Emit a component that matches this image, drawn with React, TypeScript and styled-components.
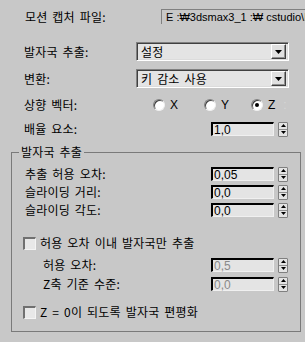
import React from "react";
import styled, { createGlobalStyle } from "styled-components";

const GlobalStyle = createGlobalStyle`
  html, body {
    margin: 0;
    padding: 0;
    background: #c8c8c8;
  }
  body {
    font-family: "Noto Sans CJK KR", "Noto Sans", sans-serif;
    font-size: 12px;
    color: #000;
  }
`;

const Panel = styled.div`
  width: 305px;
  height: 342px;
  box-sizing: border-box;
  background: #c8c8c8;
  overflow: hidden;
  display: flex;
  flex-direction: column;
  padding-top: 9px;
`;

const Row = styled.div<{ $h: number; $mt?: number; $pl?: number }>`
  display: flex;
  align-items: center;
  height: ${(p) => p.$h}px;
  margin-top: ${(p) => p.$mt ?? 0}px;
  padding-left: ${(p) => p.$pl ?? 24}px;
  flex-shrink: 0;
  white-space: nowrap;
`;

const Label = styled.div<{ $w: number }>`
  width: ${(p) => p.$w}px;
  flex-shrink: 0;
  line-height: 14px;
  word-spacing: 2px;
  letter-spacing: 0.2px;
`;

const PathBox = styled.div`
  flex: 1 1 auto;
  min-width: 0;
  height: 15px;
  box-sizing: border-box;
  border-top: 1px solid #808080;
  border-left: 1px solid #808080;
  padding-left: 4px;
  font-family: "Liberation Sans", Arial, sans-serif;
  font-size: 11px;
  line-height: 14px;
  overflow: hidden;
  white-space: nowrap;
`;

const Combo = styled.div`
  width: 153px;
  height: 19px;
  box-sizing: border-box;
  display: flex;
  align-items: center;
  border-top: 1px solid #808080;
  border-left: 1px solid #808080;
  border-right: 1px solid #fff;
  border-bottom: 1px solid #fff;
  box-shadow: inset 1px 1px 0 #404040, inset -1px -1px 0 #dcdcdc;
  background: #e4e4e4;
  padding: 0 2px 0 4px;
`;

const ComboText = styled.div`
  flex: 1;
  line-height: 15px;
  word-spacing: 2px;
  letter-spacing: 0.2px;
`;

const ComboButton = styled.div`
  width: 15px;
  height: 15px;
  box-sizing: border-box;
  background: #e0e0e0;
  border-top: 1px solid #fff;
  border-left: 1px solid #fff;
  border-right: 1px solid #404040;
  border-bottom: 1px solid #404040;
  box-shadow: inset -1px -1px 0 #909090;
  display: flex;
  align-items: center;
  justify-content: center;
`;

const RadioItem = styled.div<{ $w?: number }>`
  display: flex;
  align-items: center;
  width: ${(p) => (p.$w ? `${p.$w}px` : "auto")};
  flex-shrink: 0;
  font-family: "Liberation Sans", Arial, sans-serif;
  font-size: 12px;
`;

const RadioDot = styled.span<{ $on?: boolean }>`
  width: 12px;
  height: 12px;
  box-sizing: border-box;
  border-radius: 50%;
  background: #fff;
  border: 1px solid;
  border-color: #808080 #f0f0f0 #f0f0f0 #808080;
  box-shadow: inset 1px 1px 0 #404040;
  margin-right: 5px;
  display: flex;
  align-items: center;
  justify-content: center;
  &::after {
    content: "";
    width: 4px;
    height: 4px;
    border-radius: 50%;
    background: #000;
    display: ${(p) => (p.$on ? "block" : "none")};
  }
`;

const Faint = styled.span`
  color: #d6d6d6;
  margin-left: 8px;
`;

const Spinner = styled.div`
  display: flex;
  align-items: center;
  gap: 4px;
`;

const SpinField = styled.div<{ $dim?: boolean }>`
  width: 63px;
  height: 14px;
  box-sizing: border-box;
  background: #e4e4e4;
  border-top: 2px solid #000;
  border-left: 2px solid #000;
  border-right: 1px solid #f0f0f0;
  border-bottom: 1px solid #f0f0f0;
  padding-left: 1px;
  font-family: "Liberation Sans", Arial, sans-serif;
  font-size: 12px;
  line-height: 12px;
  color: ${(p) => (p.$dim ? "#8a8a8a" : "#000")};
`;

const SpinButtons = styled.div`
  width: 10px;
  height: 15px;
  box-sizing: border-box;
  display: flex;
  flex-direction: column;
  border: 1px solid #808080;
  border-radius: 1px;
  background: #e4e4e4;
`;

const SpinHalf = styled.div<{ $top?: boolean }>`
  flex: 1;
  display: flex;
  align-items: center;
  justify-content: center;
  border-bottom: ${(p) => (p.$top ? "1px solid #909090" : "none")};
`;

const Group = styled.div`
  position: relative;
  margin: 16px 0 0 11px;
  width: 290px;
  height: 180px;
  box-sizing: border-box;
  border: 1px solid #7a7a7a;
  display: flex;
  flex-direction: column;
`;

const Legend = styled.div`
  position: absolute;
  top: -8px;
  left: 7px;
  padding: 0 2px;
  background: #c8c8c8;
  line-height: 14px;
  word-spacing: 2px;
  letter-spacing: 0.2px;
`;

const CheckBox = styled.span`
  width: 13px;
  height: 13px;
  box-sizing: border-box;
  background: #e8e8e8;
  border-top: 2px solid #707070;
  border-left: 2px solid #707070;
  border-right: 1px solid #f4f4f4;
  border-bottom: 1px solid #f4f4f4;
  margin-right: 4px;
  flex-shrink: 0;
`;

const CheckLabel = styled.span`
  line-height: 14px;
  word-spacing: 2px;
  letter-spacing: 0.2px;
`;

const Arrow = ({ up, w = 7, h = 4 }: { up?: boolean; w?: number; h?: number }) => (
  <svg width={w} height={h} viewBox={`0 0 ${w} ${h}`}>
    <polygon
      points={up ? `0,${h} ${w},${h} ${w / 2},0` : `0,0 ${w},0 ${w / 2},${h}`}
      fill="#000"
    />
  </svg>
);

const Spin = ({ value, dim }: { value: string; dim?: boolean }) => (
  <Spinner>
    <SpinField $dim={dim}>{value}</SpinField>
    <SpinButtons>
      <SpinHalf $top>
        <Arrow up w={5} h={3} />
      </SpinHalf>
      <SpinHalf>
        <Arrow w={5} h={3} />
      </SpinHalf>
    </SpinButtons>
  </Spinner>
);

const Dropdown = ({ text }: { text: string }) => (
  <Combo>
    <ComboText>{text}</ComboText>
    <ComboButton>
      <Arrow />
    </ComboButton>
  </Combo>
);

export default function App() {
  return (
    <Panel>
      <GlobalStyle />
      <Row $h={15} $pl={25}>
        <Label $w={136}>모션 캡처 파일:</Label>
        <PathBox>E :₩3dsmax3_1 :₩ cstudio\M</PathBox>
      </Row>
      <Row $h={19} $mt={18}>
        <Label $w={112}>발자국 추출:</Label>
        <Dropdown text="설정" />
      </Row>
      <Row $h={19} $mt={8}>
        <Label $w={112}>변환:</Label>
        <Dropdown text="키 감소 사용" />
      </Row>
      <Row $h={16} $mt={9}>
        <Label $w={129}>상향 벡터:</Label>
        <RadioItem $w={51}>
          <RadioDot />X
        </RadioItem>
        <RadioItem $w={47}>
          <RadioDot />Y
        </RadioItem>
        <RadioItem>
          <RadioDot $on />Z<Faint>:</Faint>
        </RadioItem>
      </Row>
      <Row $h={14} $mt={9}>
        <Label $w={187}>배율 요소:</Label>
        <Spin value="1,0" />
      </Row>

      <Group>
        <Legend>발자국 추출</Legend>
        <Row $h={14} $mt={14} $pl={13}>
          <Label $w={186}>추출 허용 오차:</Label>
          <Spin value="0,05" />
        </Row>
        <Row $h={14} $mt={4} $pl={13}>
          <Label $w={186}>슬라이딩 거리:</Label>
          <Spin value="0,0" />
        </Row>
        <Row $h={14} $mt={4} $pl={13}>
          <Label $w={186}>슬라이딩 각도:</Label>
          <Spin value="0,0" />
        </Row>
        <Row $h={14} $mt={19} $pl={11}>
          <CheckBox />
          <CheckLabel>허용 오차 이내 발자국만 추출</CheckLabel>
        </Row>
        <Row $h={14} $mt={8} $pl={31}>
          <Label $w={168}>허용 오차:</Label>
          <Spin value="0,5" dim />
        </Row>
        <Row $h={14} $mt={5} $pl={31}>
          <Label $w={168}>Z축 기준 수준:</Label>
          <Spin value="0,0" dim />
        </Row>
        <Row $h={14} $mt={14} $pl={11}>
          <CheckBox />
          <CheckLabel>Z = 0이 되도록 발자국 편평화</CheckLabel>
        </Row>
      </Group>
    </Panel>
  );
}
